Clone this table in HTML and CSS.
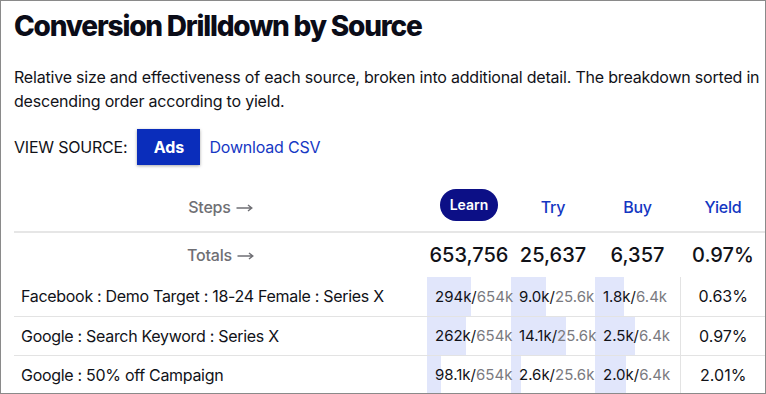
FILE: index.html
```html
<!DOCTYPE html>
<html lang="en">
<head>
<meta charset="utf-8">
<title>Conversion Drilldown by Source</title>
<link rel="stylesheet" href="styles.css">
</head>
<body>
<div class="frame">
  <h1 class="title">Conversion Drilldown by Source</h1>
  <p class="desc">Relative size and effectiveness of each source, broken into additional detail. The breakdown sorted in descending order according to yield.</p>
  <div class="controls">
    <span class="ctl-label">VIEW SOURCE:</span>
    <button class="btn">Ads</button>
    <a class="link" href="#">Download CSV</a>
  </div>
  <table class="grid">
    <colgroup>
      <col class="c-label"><col class="c-step"><col class="c-step"><col class="c-step2"><col class="c-yield">
    </colgroup>
    <thead>
      <tr>
        <th class="rowhead">Steps <svg class="arrow" width="17" height="8" viewBox="0 0 17 8" aria-label="→"><path d="M0.5 4H15.5M12 1L15.8 4L12 7" fill="none" stroke="currentColor" stroke-width="1.4"/></svg></th>
        <th class="step"><span class="pill">Learn</span></th>
        <th class="step">Try</th>
        <th class="step">Buy</th>
        <th class="step">Yield</th>
      </tr>
    </thead>
    <tbody>
      <tr class="totals">
        <td class="rowhead">Totals <svg class="arrow" width="17" height="8" viewBox="0 0 17 8" aria-label="→"><path d="M0.5 4H15.5M12 1L15.8 4L12 7" fill="none" stroke="currentColor" stroke-width="1.4"/></svg></td>
        <td class="total">653,756</td>
        <td class="total">25,637</td>
        <td class="total">6,357</td>
        <td class="total">0.97%</td>
      </tr>
      <tr class="data">
        <td class="name">Facebook : Demo Target : 18-24 Female : Series X</td>
        <td class="bar" style="--w:44px">294k/<span class="of">654k</span></td>
        <td class="bar" style="--w:35px">9.0k/<span class="of">25.6k</span></td>
        <td class="bar" style="--w:29px">1.8k/<span class="of">6.4k</span></td>
        <td class="yield">0.63%</td>
      </tr>
      <tr class="data">
        <td class="name">Google : Search Keyword : Series X</td>
        <td class="bar" style="--w:39px">262k/<span class="of">654k</span></td>
        <td class="bar" style="--w:55px">14.1k/<span class="of">25.6k</span></td>
        <td class="bar" style="--w:40px">2.5k/<span class="of">6.4k</span></td>
        <td class="yield">0.97%</td>
      </tr>
      <tr class="data">
        <td class="name">Google : 50% off Campaign</td>
        <td class="bar" style="--w:14px">98.1k/<span class="of">654k</span></td>
        <td class="bar" style="--w:10px">2.6k/<span class="of">25.6k</span></td>
        <td class="bar" style="--w:31px">2.0k/<span class="of">6.4k</span></td>
        <td class="yield">2.01%</td>
      </tr>
    </tbody>
  </table>
</div>
</body>
</html>
```

FILE: styles.css
```css
* { box-sizing: border-box; }
html, body { margin: 0; padding: 0; background: #fff; }
body {
  font-family: "Inter", "Liberation Sans", sans-serif;
  color: #111218;
  letter-spacing: -0.2px;
}
.frame {
  width: 766px;
  height: 394px;
  border: 1px solid #8a8a8a;
  padding: 8px 0 0 13px;
  overflow: hidden;
}
.title {
  margin: 0;
  font-size: 28px;
  line-height: 34px;
  font-weight: 800;
  letter-spacing: -1.2px;
  color: #0b0c18;
}
.desc {
  margin: 22px 0 0;
  font-size: 16px;
  line-height: 24px;
  color: #111218;
}
.controls {
  margin-top: 16px;
  display: flex;
  align-items: center;
  height: 36px;
}
.ctl-label {
  font-size: 16px;
  color: #111218;
}
.btn {
  margin-left: 10px;
  width: 63px;
  height: 36px;
  border: 0;
  background: #0a2dbb;
  color: #fff;
  font-family: inherit;
  font-size: 16px;
  font-weight: 700;
  letter-spacing: 0;
  box-shadow: 0 1px 3px rgba(0,0,0,0.35);
  padding: 0;
}
.link {
  margin-left: 9px;
  font-size: 16px;
  color: #1638c4;
  text-decoration: none;
}
.grid {
  margin-top: 17px;
  width: 752px;
  table-layout: fixed;
  border-collapse: collapse;
}
.c-label { width: 413px; }
.c-step { width: 84px; }
.c-step2 { width: 85px; }
.c-yield { width: 86px; }
.grid th, .grid td { padding: 0; }
thead tr { height: 50px; border-bottom: 2px solid #e6e6e6; }
.rowhead {
  text-align: center;
  font-size: 16px;
  font-weight: 500;
  color: #6f6f74;
}
.arrow {
  display: inline-block;
  vertical-align: 1px;
  margin-left: 1px;
}
.step {
  text-align: center;
  font-size: 16px;
  font-weight: 500;
  color: #1437c2;
}
.pill {
  display: inline-flex;
  align-items: center;
  justify-content: center;
  width: 58px;
  height: 32px;
  border-radius: 16px;
  background: #0c0f86;
  color: #fff;
  font-size: 14px;
  font-weight: 600;
  letter-spacing: 0;
  margin-bottom: 4px;
}
.totals { height: 45px; }
.total {
  text-align: center;
  font-size: 20px;
  font-weight: 500;
  color: #111218;
  white-space: nowrap;
  letter-spacing: 0;
}
.data { height: 39px; border-top: 1px solid #e3e3e3; }
.totals + .data { border-top: 0; }
.name {
  padding-left: 7px !important;
  font-size: 16px;
  letter-spacing: -0.3px;
  color: #111218;
  white-space: nowrap;
}
.bar {
  padding-left: 8px !important;
  font-size: 15px;
  color: #111218;
  white-space: nowrap;
  letter-spacing: 0;
  background: linear-gradient(to right, #e1e6fb var(--w), transparent var(--w));
}
.of { color: #7a7a80; }
.yield {
  text-align: center;
  font-size: 16px;
  letter-spacing: 0;
  color: #111218;
  border-left: 1px solid #e3e3e3;
}
```
